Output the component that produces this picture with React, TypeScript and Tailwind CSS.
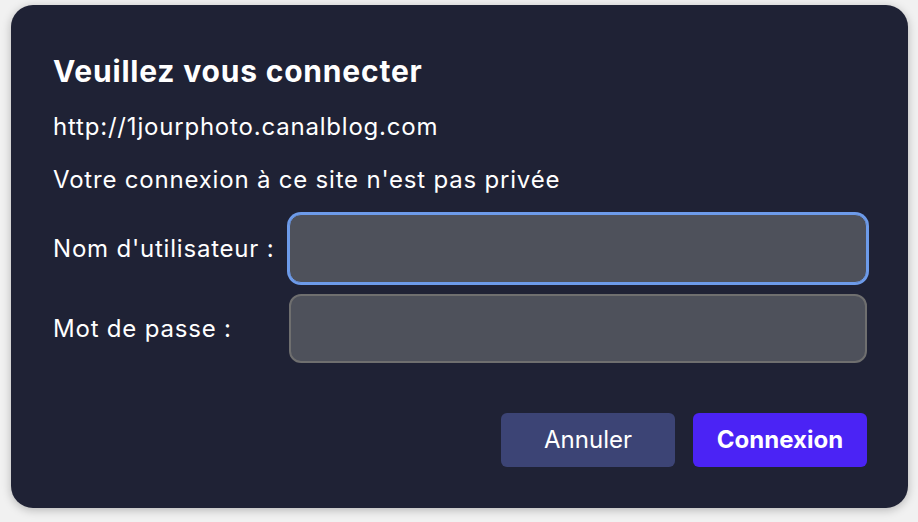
export default function App() {
  return (
    <div className="w-[918px] h-[522px] bg-[#f1f1f1] pt-[5px] pl-[11px] font-['Inter','Liberation_Sans',sans-serif] text-white">
      <div className="w-[897px] h-[503px] rounded-[22px] bg-[#1f2235] shadow-[0_2px_10px_rgba(0,0,0,0.25)] pt-[48px] pl-[42px] pr-[41px] flex flex-col">
        <h1 className="text-[30px] leading-[36px] font-bold tracking-[0.8px]">Veuillez vous connecter</h1>
        <p className="mt-[23px] text-[24px] leading-[30px] tracking-[0.8px]">http://1jourphoto.canalblog.com</p>
        <p className="mt-[23px] text-[24px] leading-[30px] tracking-[0.8px]">Votre connexion à ce site n'est pas privée</p>

        <div className="mt-[19px] flex flex-col gap-[11px]">
          <div className="flex items-center">
            <label className="w-[236px] text-[24px] leading-[30px] tracking-[0.8px]">Nom d'utilisateur :</label>
            <input
              type="text"
              className="w-[578px] h-[69px] rounded-[12px] bg-[#4e515b] border border-[#6d9bea] ring-2 ring-[#6d9bea] outline-none px-4 text-[24px]"
            />
          </div>
          <div className="flex items-center">
            <label className="w-[236px] text-[24px] leading-[30px] tracking-[0.8px]">Mot de passe :</label>
            <input
              type="password"
              className="w-[578px] h-[69px] rounded-[12px] bg-[#4e515b] border-2 border-[#6f6f6f] outline-none px-4 text-[24px]"
            />
          </div>
        </div>

        <div className="mt-[50px] flex justify-end gap-[18px]">
          <button className="w-[174px] h-[54px] rounded-[6px] bg-[#3c4475] text-[24px]">Annuler</button>
          <button className="w-[174px] h-[54px] rounded-[6px] bg-[#4b23f5] text-[24px] font-bold">Connexion</button>
        </div>
      </div>
    </div>
  )
}
